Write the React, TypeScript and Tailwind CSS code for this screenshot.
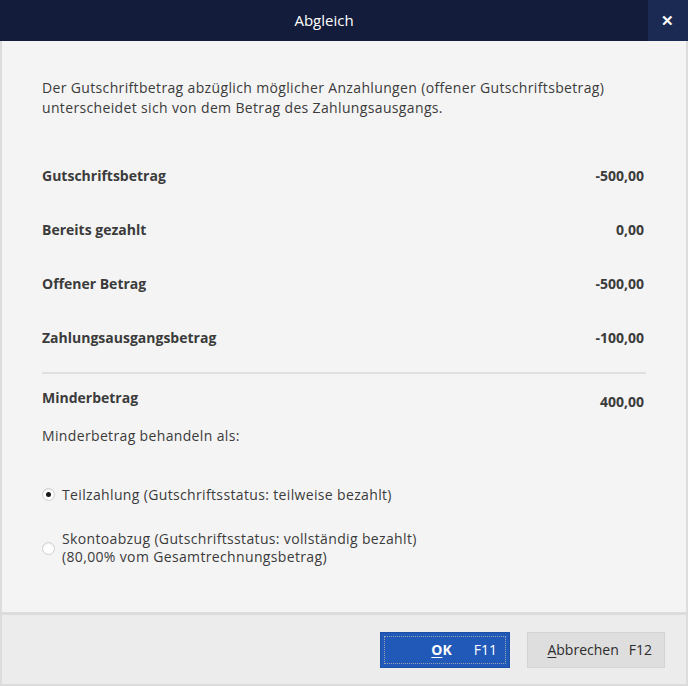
import React from "react";

const rows = [
  { label: "Gutschriftsbetrag", value: "-500,00" },
  { label: "Bereits gezahlt", value: "0,00" },
  { label: "Offener Betrag", value: "-500,00" },
  { label: "Zahlungsausgangsbetrag", value: "-100,00" },
];

const Radio = ({ checked }: { checked?: boolean }) => (
  <span className="w-[13px] h-[13px] rounded-full border border-[#cfcfcf] bg-white flex items-center justify-center shrink-0 shadow-[inset_0_1px_1px_rgba(0,0,0,0.08)]">
    {checked && <span className="w-[5px] h-[5px] rounded-full bg-[#1a1a1a]" />}
  </span>
);

const App = () => {
  return (
    <div
      className="w-[688px] h-[686px] flex flex-col text-[#3b3b3b] text-[14px] tracking-[0.35px]"
      style={{ fontFamily: '"Open Sans", "Noto Sans", sans-serif' }}
    >
      <div className="h-[41px] bg-[#131d3b] flex items-center shrink-0">
        <span className="flex-1 text-center text-white text-[15px] tracking-normal">Abgleich</span>
        <button className="w-[40px] h-[41px] bg-[#1b2a52] text-white flex items-center justify-center text-[15px] font-bold">
          ✕
        </button>
      </div>

      <div className="flex-1 bg-[#f4f4f4] border-x-2 border-[#dcdcdc] px-[40px] pt-[37px]">
        <p className="leading-[20px]">
          Der Gutschriftbetrag abzüglich möglicher Anzahlungen (offener Gutschriftsbetrag)
          <br />
          unterscheidet sich von dem Betrag des Zahlungsausgangs.
        </p>

        <div className="mt-[30px] pr-[2px] tracking-normal">
          {rows.map((r) => (
            <div key={r.label} className="h-[54px] flex items-center justify-between font-bold">
              <span>{r.label}</span>
              <span>{r.value}</span>
            </div>
          ))}
        </div>

        <div className="mt-[8px] border-t-2 border-[#e0e0e0]" />

        <div className="mt-[13px] flex justify-between font-bold pr-[2px] tracking-normal">
          <span>Minderbetrag</span>
          <span className="mt-[4px]">400,00</span>
        </div>

        <p className="mt-[13px]">Minderbetrag behandeln als:</p>

        <div className="mt-[38px] flex items-center gap-[7px]">
          <Radio checked />
          <span>Teilzahlung (Gutschriftsstatus: teilweise bezahlt)</span>
        </div>

        <div className="mt-[25px] flex items-center gap-[7px]">
          <Radio />
          <span className="leading-[18px]">
            Skontoabzug (Gutschriftsstatus: vollständig bezahlt)
            <br />
            (80,00% vom Gesamtrechnungsbetrag)
          </span>
        </div>
      </div>

      <div className="h-[74px] shrink-0 bg-[#ececec] border-2 border-t-[3px] border-[#dcdcdc] flex items-center justify-end gap-[17px] pr-[21px] tracking-normal">
        <button className="w-[130px] h-[36px] bg-[#2159b9] border border-[#1d4fa6] p-[3px]">
          <span className="w-full h-full border border-dotted border-[#9aa3b3] flex items-center justify-end pr-[8px] text-white text-[14px] gap-[22px]">
            <span className="font-bold">
              <span className="underline underline-offset-2">O</span>K
            </span>
            <span>F11</span>
          </span>
        </button>
        <button className="w-[138px] h-[36px] bg-[#dedede] border border-[#d3d3d3] flex items-center justify-end pr-[12px] gap-[10px] text-[14px] text-[#2c2c2c]">
          <span>
            <span className="underline underline-offset-2">A</span>bbrechen
          </span>
          <span>F12</span>
        </button>
      </div>
    </div>
  );
};

export default App;
